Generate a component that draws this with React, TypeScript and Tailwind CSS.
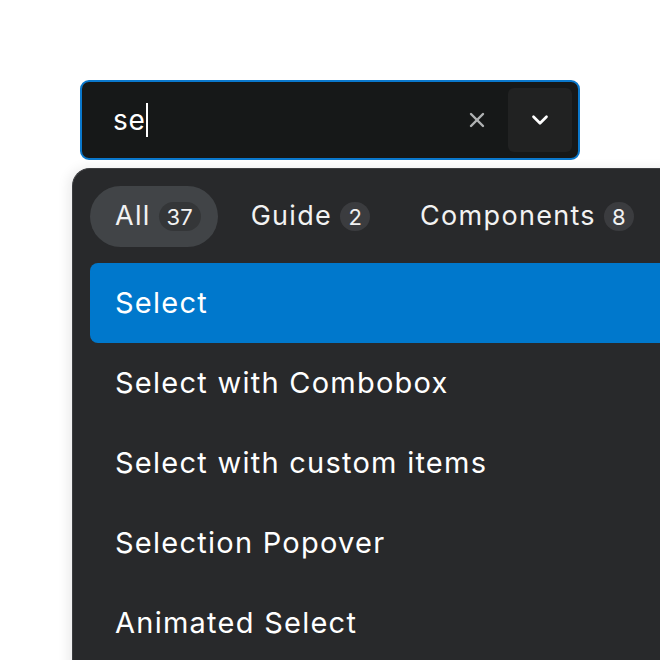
import { X, ChevronDown } from "lucide-react";

const tabs = [
    { label: "All", count: 37, active: true },
    { label: "Guide", count: 2, active: false },
    { label: "Components", count: 8, active: false },
];

const items = [
    "Select",
    "Select with Combobox",
    "Select with custom items",
    "Selection Popover",
    "Animated Select",
];

const App = () => {
    return (
        <div
            className="w-[660px] h-[660px] overflow-hidden bg-white"
            style={{ fontFamily: "Inter, 'Noto Sans', sans-serif" }}
        >
            <div className="pt-[80px] pl-[80px]">
                {/* Combobox input */}
                <div className="w-[500px] h-[80px] rounded-[9px] border-2 border-[#0a78cc] bg-[#161818] flex items-center pl-[31px] pr-[6px]">
                    <div className="flex-1 flex items-center text-[28px] tracking-[0.8px] text-white">
                        se
                        <span className="inline-block w-[2px] h-[34px] bg-white" />
                    </div>
                    <X className="w-[24px] h-[24px] text-[#b0b2b3] mr-[19px]" strokeWidth={2.4} />
                    <button className="w-[64px] h-[64px] rounded-[6px] bg-[#212222] flex items-center justify-center">
                        <ChevronDown className="w-[26px] h-[26px] text-white" strokeWidth={2.5} />
                    </button>
                </div>
            </div>

            {/* Popover */}
            <div className="ml-[72px] mt-[8px] w-[620px] h-[520px] rounded-tl-[18px] bg-[#28292b] border-t border-l border-[#3c3d40] shadow-[-4px_0_12px_rgba(0,0,0,0.08)] pt-[17px] pl-[17px]">
                {/* Tabs */}
                <div className="flex items-center gap-[8px] text-[#f2f2f2] whitespace-nowrap">
                    {tabs.map((tab) => (
                        <div
                            key={tab.label}
                            className={`h-[61px] shrink-0 rounded-full flex items-center gap-[8px] pl-[25px] pr-[17px] ${
                                tab.active ? "bg-[#414447]" : ""
                            }`}
                        >
                            <span className="text-[27px] tracking-[1.3px]">{tab.label}</span>
                            <span
                                className={`h-[29px] min-w-[30px] px-[8px] rounded-full flex items-center justify-center text-[22px] leading-none ${
                                    tab.active ? "bg-[#343638]" : "bg-[#3b3c3f]"
                                }`}
                            >
                                {tab.count}
                            </span>
                        </div>
                    ))}
                </div>

                {/* Results */}
                <div className="mt-[16px] flex flex-col">
                    {items.map((item, i) => (
                        <div
                            key={item}
                            className={`h-[80px] flex items-center pl-[25px] text-[29px] tracking-[1.25px] text-white ${
                                i === 0 ? "bg-[#0078cc] rounded-[8px]" : ""
                            }`}
                        >
                            {item}
                        </div>
                    ))}
                </div>
            </div>
        </div>
    );
};

export default App;
